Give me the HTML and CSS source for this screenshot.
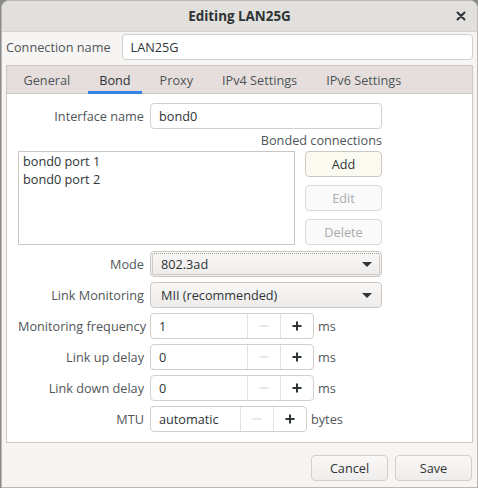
FILE: index.html
```html
<!DOCTYPE html>
<html>
<head>
<meta charset="utf-8">
<link rel="stylesheet" href="styles.css">
</head>
<body>
<div class="window">
  <div class="header">
    <div class="title">Editing LAN25G</div>
    <button class="close" aria-label="Close">
      <svg width="10" height="10" viewBox="0 0 10 10"><path d="M1.5 1.5 L8.5 8.5 M8.5 1.5 L1.5 8.5" stroke="#2e3436" stroke-width="2" stroke-linecap="round"/></svg>
    </button>
  </div>
  <div class="content">
    <div class="name-row">
      <span class="label">Connection name</span>
      <div class="entry grow">LAN25G</div>
    </div>
    <div class="notebook">
      <div class="tabs">
        <div class="tab">General</div>
        <div class="tab active">Bond</div>
        <div class="tab">Proxy</div>
        <div class="tab">IPv4 Settings</div>
        <div class="tab">IPv6 Settings</div>
      </div>
      <div class="page">
        <div class="form-row">
          <span class="flabel">Interface name</span>
          <div class="entry wide">bond0</div>
        </div>
        <div class="bonded-title">Bonded connections</div>
        <div class="bonded">
          <div class="list">
            <div class="item">bond0 port 1</div>
            <div class="item">bond0 port 2</div>
          </div>
          <div class="list-buttons">
            <div class="btn hover">Add</div>
            <div class="btn disabled">Edit</div>
            <div class="btn disabled">Delete</div>
          </div>
        </div>
        <div class="form-row first">
          <span class="flabel">Mode</span>
          <div class="combo focus"><span>802.3ad</span><span class="arrow"></span></div>
        </div>
        <div class="form-row">
          <span class="flabel">Link Monitoring</span>
          <div class="combo"><span>MII (recommended)</span><span class="arrow"></span></div>
        </div>
        <div class="form-row">
          <span class="flabel">Monitoring frequency</span>
          <div class="spin"><span class="val">1</span><span class="sb minus"><svg width="10" height="10" viewBox="0 0 10 10"><path d="M0.5 5 H9.5" stroke="#d0d0d0" stroke-width="1.2"/></svg></span><span class="sb plus"><svg width="10" height="10" viewBox="0 0 10 10"><path d="M0.5 5 H9.5 M5 0.5 V9.5" stroke="#2e3436" stroke-width="2"/></svg></span></div>
          <span class="unit">ms</span>
        </div>
        <div class="form-row">
          <span class="flabel">Link up delay</span>
          <div class="spin"><span class="val">0</span><span class="sb minus"><svg width="10" height="10" viewBox="0 0 10 10"><path d="M0.5 5 H9.5" stroke="#d0d0d0" stroke-width="1.2"/></svg></span><span class="sb plus"><svg width="10" height="10" viewBox="0 0 10 10"><path d="M0.5 5 H9.5 M5 0.5 V9.5" stroke="#2e3436" stroke-width="2"/></svg></span></div>
          <span class="unit">ms</span>
        </div>
        <div class="form-row">
          <span class="flabel">Link down delay</span>
          <div class="spin"><span class="val">0</span><span class="sb minus"><svg width="10" height="10" viewBox="0 0 10 10"><path d="M0.5 5 H9.5" stroke="#d0d0d0" stroke-width="1.2"/></svg></span><span class="sb plus"><svg width="10" height="10" viewBox="0 0 10 10"><path d="M0.5 5 H9.5 M5 0.5 V9.5" stroke="#2e3436" stroke-width="2"/></svg></span></div>
          <span class="unit">ms</span>
        </div>
        <div class="form-row">
          <span class="flabel">MTU</span>
          <div class="spin mtu"><span class="val">automatic</span><span class="sb minus"><svg width="10" height="10" viewBox="0 0 10 10"><path d="M0.5 5 H9.5" stroke="#d0d0d0" stroke-width="1.2"/></svg></span><span class="sb plus"><svg width="10" height="10" viewBox="0 0 10 10"><path d="M0.5 5 H9.5 M5 0.5 V9.5" stroke="#2e3436" stroke-width="2"/></svg></span></div>
          <span class="unit">bytes</span>
        </div>
      </div>
    </div>
    <div class="actions">
      <div class="btn action">Cancel</div>
      <div class="btn action">Save</div>
    </div>
  </div>
</div>
</body>
</html>
```
FILE: styles.css
```css
html, body {
  margin: 0;
  padding: 0;
  width: 478px;
  height: 488px;
  overflow: hidden;
  background: #8a8a8a;
}
body {
  font-family: "Open Sans", "DejaVu Sans", sans-serif;
  font-size: 12.7px;
  color: #2e3436;
}
.window {
  box-sizing: border-box;
  width: 477px;
  height: 488px;
  margin-left: 1px;
  background: #f6f5f4;
  border: 1px solid #bcb8b3;
  border-radius: 8px 8px 0 0;
  display: flex;
  flex-direction: column;
  overflow: hidden;
}
.header {
  height: 30px;
  flex: none;
  background: #e2e0dc;
  border-bottom: 1px solid #d6d2ce;
  display: flex;
  align-items: center;
  justify-content: center;
  position: relative;
}
.title {
  font-weight: bold;
  font-size: 13.4px;
  color: #2e3436;
}
.close {
  position: absolute;
  right: 10px;
  top: 9px;
  width: 12px;
  height: 12px;
  padding: 0;
  border: 0;
  background: transparent;
  display: flex;
  align-items: center;
  justify-content: center;
}
.content {
  flex: 1;
  display: flex;
  flex-direction: column;
  padding: 2px 4px 0 4px;
}
.name-row {
  display: flex;
  align-items: center;
  gap: 11px;
  height: 26px;
}
.label {
  color: #505659;
}
.entry {
  box-sizing: border-box;
  height: 26px;
  background: #ffffff;
  border: 1px solid #d3cfcb;
  border-radius: 4px;
  display: flex;
  align-items: center;
  padding: 0 8px;
  color: #2e3436;
}
.grow { flex: 1; }
.notebook {
  margin-top: 5px;
  border: 1px solid #cdc7c2;
  display: flex;
  flex-direction: column;
}
.tabs {
  height: 27px;
  background: #e5dedc;
  border-bottom: 1px solid #cdc7c2;
  display: flex;
  padding-left: 2px;
}
.tab {
  padding: 0 11px;
  margin: 0 3.5px;
  display: flex;
  align-items: center;
  color: #4e5457;
  position: relative;
}
.tab.active { color: #2e3436; }
.tab.active::after {
  content: "";
  position: absolute;
  left: 0;
  right: 0;
  bottom: -1px;
  height: 3px;
  background: #3584e4;
}
.page {
  background: #ffffff;
  padding: 9px 90px 10px 11px;
  display: flex;
  flex-direction: column;
}
.form-row {
  display: flex;
  align-items: center;
  gap: 6px;
  height: 26px;
  margin-top: 5px;
}
.form-row:first-child { margin-top: 0; }
.form-row.first { margin-top: 6px; }
.flabel {
  width: 126px;
  text-align: right;
  flex: none;
  color: #505659;
  white-space: nowrap;
}
.wide { flex: 1; }
.bonded-title {
  text-align: right;
  color: #505659;
  margin-top: 3px;
  height: 17px;
  line-height: 17px;
}
.bonded {
  display: flex;
  gap: 10px;
  margin-top: 2px;
  height: 94px;
}
.list {
  flex: 1;
  border: 1px solid #cdc7c2;
  padding: 0 4px;
}
.item {
  height: 18px;
  line-height: 18px;
}
.list-buttons {
  width: 77px;
  display: flex;
  flex-direction: column;
  gap: 8px;
}
.btn {
  box-sizing: border-box;
  height: 26px;
  border: 1px solid #d3cfcb;
  border-radius: 4px;
  background: #f6f5f4;
  display: flex;
  align-items: center;
  justify-content: center;
  color: #2e3436;
}
.btn.hover { background: #fbfaf1; border-color: #cdc8bf; }
.btn.disabled { color: #a9acad; background: #fafafa; border-color: #dcd8d4; }
.combo {
  box-sizing: border-box;
  flex: 1;
  height: 26px;
  border: 1px solid #cdc7c2;
  border-radius: 4px;
  background: linear-gradient(#f8f7f6, #eeecea);
  display: flex;
  align-items: center;
  justify-content: space-between;
  padding: 0 9px 0 10px;
}
.combo.focus {
  outline: 1px dotted #a9a6a2;
  outline-offset: -3px;
}
.arrow {
  width: 0;
  height: 0;
  border-left: 5px solid transparent;
  border-right: 5px solid transparent;
  border-top: 5px solid #2e3436;
}
.spin {
  box-sizing: border-box;
  width: 164px;
  height: 26px;
  border: 1px solid #d3cfcb;
  border-radius: 4px;
  background: #ffffff;
  display: flex;
  align-items: stretch;
}
.spin.mtu { width: 157px; }
.val {
  flex: 1;
  display: flex;
  align-items: center;
  padding-left: 8px;
}
.sb {
  width: 32px;
  border-left: 1px solid #e4e1de;
  display: flex;
  align-items: center;
  justify-content: center;
}
.unit {
  color: #505659;
  margin-left: -2px;
}
.actions {
  display: flex;
  justify-content: flex-end;
  gap: 7px;
  padding: 12px 1px 0 0;
}
.btn.action {
  width: 77px;
  background: linear-gradient(#f9f8f7, #efedeb);
}
```
